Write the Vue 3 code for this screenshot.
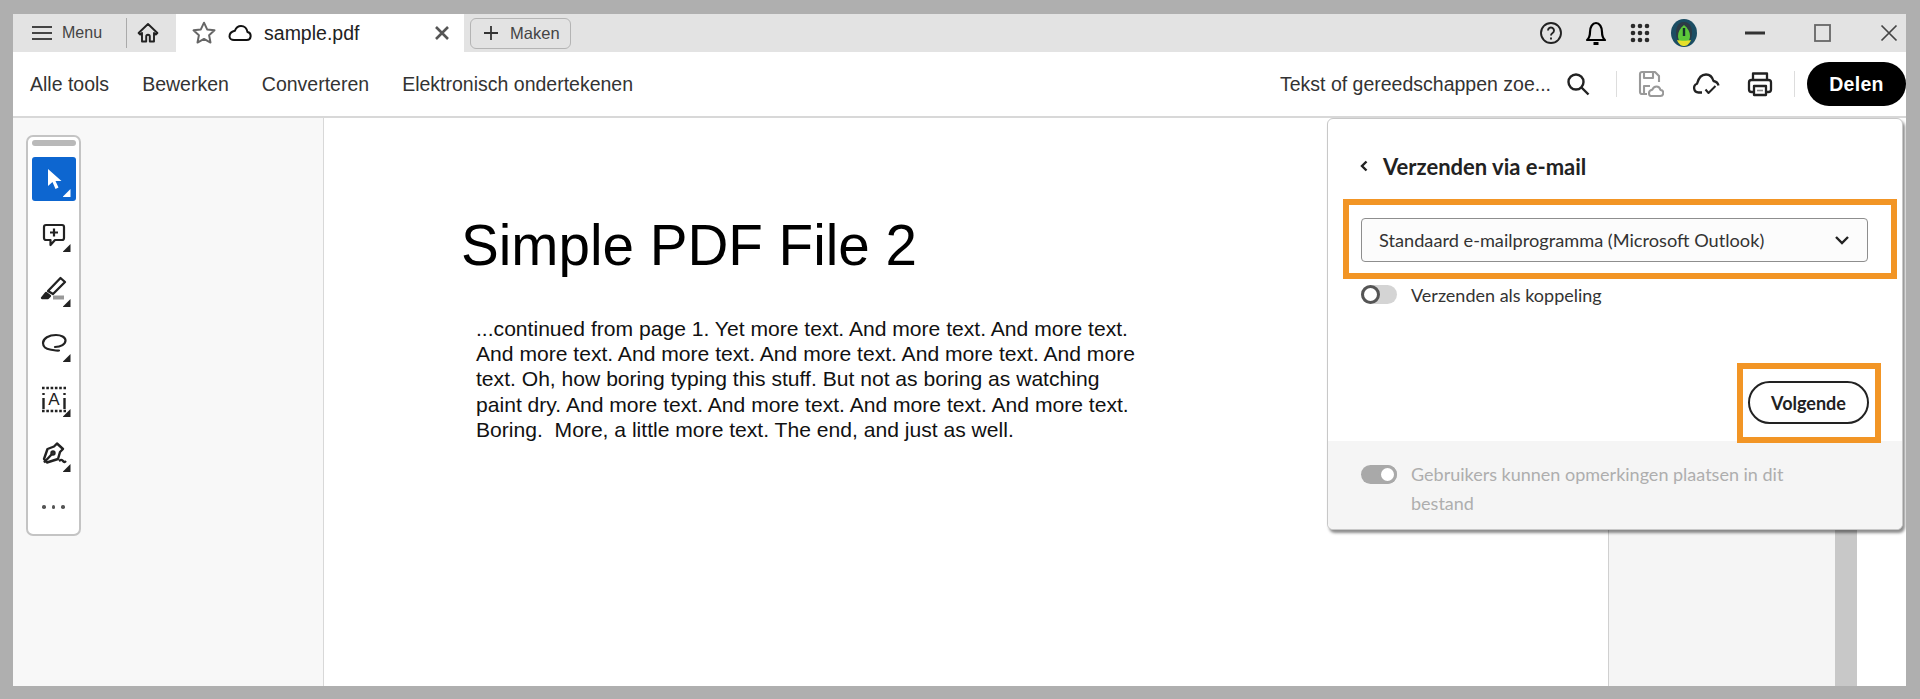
<script setup>
const navItems = ['Alle tools', 'Bewerken', 'Converteren', 'Elektronisch ondertekenen']
const pdfLines = [
  '...continued from page 1. Yet more text. And more text. And more text.',
  'And more text. And more text. And more text. And more text. And more',
  'text. Oh, how boring typing this stuff. But not as boring as watching',
  'paint dry. And more text. And more text. And more text. And more text.',
  'Boring.  More, a little more text. The end, and just as well.'
]
</script>

<template>
  <div class="frame">
    <header class="tabbar">
      <button class="menu">
        <svg width="22" height="18" viewBox="0 0 22 18"><path d="M1 3h20M1 9h20M1 15h20" stroke="#444" stroke-width="2.200" fill="none"/></svg>
        <span>Menu</span>
      </button>
      <i class="tab-divider"></i>
      <svg class="home" width="24" height="24" viewBox="0 0 24 24" fill="none" stroke="#222" stroke-width="1.900" stroke-linejoin="round"><path d="M12 3 2.600 12l1.600 1.600 1.800-1.600v8.500h4.200v-5a1.800 1.800 0 0 1 3.600 0v5H18V12l1.800 1.600 1.600-1.600z"/></svg>
      <div class="tab">
        <svg class="star" width="26" height="26" viewBox="0 0 24 24" fill="none" stroke="#666" stroke-width="1.800" stroke-linejoin="round"><path d="m12 2.500 2.900 6.200 6.800.8-5 4.600 1.300 6.700-6-3.300-6 3.300 1.300-6.700-5-4.600 6.800-.8z"/></svg>
        <svg class="cloud" width="24" height="18" viewBox="0 0 24 18" fill="none" stroke="#111" stroke-width="2" stroke-linejoin="round"><path d="M6 16h12.500a4 4 0 0 0 1-7.900C19 4.800 16.500 2 13 2c-3.200 0-5 2-6.200 4.800C3.600 7.500 1.500 10 1.500 12.500 1.500 14.500 3.500 16 6 16z"/></svg>
        <span class="tab-name">sample.pdf</span>
        <svg class="tab-close" width="16" height="16" viewBox="0 0 16 16"><path d="m2 2 12 12M14 2 2 14" stroke="#555" stroke-width="2.600"/></svg>
      </div>
      <button class="maken">
        <svg width="16" height="16" viewBox="0 0 16 16"><path d="M8 1v14M1 8h14" stroke="#333" stroke-width="1.800"/></svg>
        <span>Maken</span>
      </button>
      <div class="window-icons">
        <svg class="w-help" width="24" height="24" viewBox="0 0 24 24" fill="none" stroke="#222" stroke-width="1.900"><circle cx="12" cy="12" r="10"/><path d="M9 9.500a3 3 0 1 1 4.600 2.500c-1 .7-1.600 1.200-1.600 2.500"/><path d="M12 16.500v2"/></svg>
        <svg class="w-bell" width="24" height="28" viewBox="0 0 24 28" fill="none" stroke="#000" stroke-width="2.200" stroke-linejoin="round"><path d="M3 21c2.500-2 3-3.500 3-8 0-5 2.500-9 6-9s6 4 6 9c0 4.500.5 6 3 8z"/><path d="M9.500 24.500h5" stroke-width="3"/></svg>
        <svg class="w-apps" width="20" height="20" viewBox="0 0 20 20" fill="#2a2a2a"><circle cx="3" cy="3" r="2.300"/><circle cx="10" cy="3" r="2.300"/><circle cx="17" cy="3" r="2.300"/><circle cx="3" cy="10" r="2.300"/><circle cx="10" cy="10" r="2.300"/><circle cx="17" cy="10" r="2.300"/><circle cx="3" cy="17" r="2.300"/><circle cx="10" cy="17" r="2.300"/><circle cx="17" cy="17" r="2.300"/></svg>
        <svg class="w-avatar" width="26" height="28" viewBox="0 0 26 28"><ellipse cx="13" cy="14" rx="13" ry="14" fill="#1b4d63"/><path d="M13 3C6 3 5 10 5 14c0 6 3 10 8 11 5-1 8-5 8-11 0-4-1-11-8-11z" fill="#2d3a46"/><path d="M13 6c-4 3-6 7-6 11 0 4 3 9 6 9s6-5 6-9c0-4-2-8-6-11z" fill="#5cc83a"/><path d="M6 21c2 5 5 6 7 6s5-1 7-6c-3 1-11 1-14 0z" fill="#e6e02a"/><path d="M13 9v8" stroke="#14302c" stroke-width="2.400"/></svg>
        <svg class="w-min" width="20" height="4" viewBox="0 0 20 4"><path d="M0 2h20" stroke="#333" stroke-width="3"/></svg>
        <svg class="w-max" width="17" height="18" viewBox="0 0 17 18"><rect x="1" y="1" width="15" height="16" fill="none" stroke="#666" stroke-width="1.800"/></svg>
        <svg class="w-close" width="18" height="18" viewBox="0 0 18 18"><path d="m1.500 1.500 15 15M16.500 1.500l-15 15" stroke="#444" stroke-width="1.700"/></svg>
      </div>
    </header>

    <nav class="toolbar">
      <a v-for="item in navItems" :key="item" class="nav-item">{{ item }}</a>
      <span class="search-text">Tekst of gereedschappen zoe...</span>
      <svg class="t-search" width="24" height="24" viewBox="0 0 24 24" fill="none" stroke="#222" stroke-width="2.400"><circle cx="10" cy="10" r="7.500"/><path d="m15.500 15.500 7 7"/></svg>
      <i class="tool-divider d1"></i>
      <svg class="t-save" width="26" height="28" viewBox="0 0 26 28" fill="none" stroke="#999" stroke-width="2.100" stroke-linejoin="round"><path d="M9 24H4a2 2 0 0 1-2-2V4a2 2 0 0 1 2-2h13l4 4v6"/><path d="M6 2v6h9V2M6 24v-8h6"/><path d="M13 26h9a3 3 0 0 0 .5-6c-.5-2-2-3.500-4-3.500-2.200 0-3.500 1.300-4.200 3.200-1.800.3-3.300 1.500-3.300 3.300 0 1.700 1 3 2 3z" fill="#fff"/></svg>
      <svg class="t-cloud" width="28" height="24" viewBox="0 0 28 24" fill="none" stroke="#222" stroke-width="2.300" stroke-linejoin="round"><path d="M10 20.500H6.500a4.500 4.500 0 0 1-1.500-8.700C6.500 6 10 2.500 14 2.500c4 0 6.500 3 7.500 6.500 2.500.5 4.500 2.300 5 4.500"/><path d="m13.500 17.500 3 3.500 7-7" stroke-width="2"/></svg>
      <svg class="t-print" width="26" height="26" viewBox="0 0 26 26" fill="none" stroke="#222" stroke-width="2.300" stroke-linejoin="round"><path d="M6 9V2.500h14V9"/><rect x="2" y="9" width="22" height="12" rx="2.500"/><rect x="7" y="15" width="12" height="9" fill="#fff"/><path d="M10 19.500h6" stroke-width="1.600" stroke="#888"/></svg>
      <i class="tool-divider d2"></i>
      <button class="delen">Delen</button>
    </nav>

    <main class="workspace">
      <aside class="left-panel">
        <div class="rail">
          <i class="handle"></i>
          <button class="tool selected">
            <svg width="18" height="24" viewBox="0 0 18 24"><path d="M3 2v17l4.500-4 3 7 3-1.500-3-6.500h6z" fill="#fff"/></svg>
          </button>
          <button class="tool icon-comment">
            <svg width="24" height="26" viewBox="0 0 24 26" fill="none" stroke="#222" stroke-width="2.200" stroke-linejoin="round"><path d="M4 2h16a2 2 0 0 1 2 2v11a2 2 0 0 1-2 2h-7l-4.500 5v-5H4a2 2 0 0 1-2-2V4a2 2 0 0 1 2-2z"/><path d="M12 5.500v8M8 9.500h8"/></svg>
          </button>
          <button class="tool">
            <svg width="28" height="26" viewBox="0 0 28 26" fill="none" stroke="#222" stroke-width="2.300" stroke-linejoin="round"><path d="M20.500 2 25 6 13 18l-5-3z"/><path d="m2 22 4-5 4 3-2 2z" fill="#222"/><path d="M13 21.500h11" stroke="#999" stroke-width="4"/></svg>
          </button>
          <button class="tool">
            <svg width="26" height="24" viewBox="0 0 26 24" fill="none" stroke="#222" stroke-width="2.200" stroke-linecap="round"><path d="M14 15c6 0 10.500-3 10.500-6.500C24.500 5 20 3 15 3 8 3 2 6.500 2 11c0 3.500 3 6 7 6.500 3 .4 7 1.500 9 1"/></svg>
          </button>
          <button class="tool">
            <svg width="26" height="28" viewBox="0 0 26 28" fill="none" stroke="#222"><path d="M1 3h24M1 26h24" stroke-width="2.600" stroke-dasharray="2.600 1.700"/><path d="M2.500 8v2M23.500 8v2" stroke-width="2.400"/><path d="M2.500 13v11M23.500 13v11" stroke-width="2.400"/><text x="13" y="20" text-anchor="middle" class="a-glyph">A</text></svg>
          </button>
          <button class="tool">
            <svg width="28" height="26" viewBox="0 0 28 26" fill="none" stroke="#222" stroke-width="2.400" stroke-linejoin="round"><path d="M17 2.500 23 8l-3 3-2 7-11 3.500-3-3.500L7.500 8l6.500-2.500z"/><path d="M4 21.500 12 13"/><circle cx="13" cy="12" r="1.500"/><path d="M19 20c2-1.500 3-1.500 4 0s2 1 3 0"/></svg>
          </button>
          <div class="dots"><i></i><i></i><i></i></div>
        </div>
      </aside>

      <section class="document">
        <h1 class="pdf-title">Simple PDF File 2</h1>
        <p class="pdf-body"><span v-for="line in pdfLines" :key="line" class="pdf-line">{{ line }}</span></p>
      </section>

      <aside class="right-panel"></aside>
      <div class="scroll-track"></div>
      <div class="white-edge"></div>

      <div class="popup">
        <div class="popup-title">
          <svg width="10" height="14" viewBox="0 0 10 14"><path d="M7.500 2.500 3 7l4.500 4.500" fill="none" stroke="#222" stroke-width="2.400"/></svg>
          <span>Verzenden via e-mail</span>
        </div>
        <div class="callout select-callout">
          <div class="select">
            <span>Standaard e-mailprogramma (Microsoft Outlook)</span>
            <svg width="16" height="10" viewBox="0 0 16 10"><path d="m2 2 6 6 6-6" fill="none" stroke="#222" stroke-width="2.400"/></svg>
          </div>
        </div>
        <div class="switch-row">
          <span class="switch off"></span>
          <span>Verzenden als koppeling</span>
        </div>
        <div class="action-row">
          <div class="callout button-callout">
            <button class="volgende">Volgende</button>
          </div>
        </div>
        <footer class="popup-footer">
          <span class="switch on"></span>
          <span class="footer-text">Gebruikers kunnen opmerkingen plaatsen in dit bestand</span>
        </footer>
      </div>
    </main>
  </div>
</template>

<style scoped>
.frame {
  margin: 14px 14px 13px 13px;
  width: 1893px;
  height: 672px;
  background: #fff;
  display: flex;
  flex-direction: column;
  font-family: "Liberation Sans", Arial, sans-serif;
  overflow: hidden;
}
button { font-family: inherit; padding: 0; border: 0; background: none; }
svg { display: block; flex: none; }

.tabbar {
  height: 38px;
  flex: none;
  background: #e3e3e3;
  display: flex;
  align-items: center;
}
.menu {
  display: flex;
  align-items: center;
  margin-left: 18px;
  font-size: 16px;
  color: #444;
  gap: 9px;
}
.tab-divider { width: 1px; height: 30px; background: #aaa; margin-left: 24px; }
.home { margin-left: 9px; }
.tab {
  margin-left: 16px;
  width: 288px;
  height: 38px;
  background: #fff;
  display: flex;
  align-items: center;
  position: relative;
}
.star { margin-left: 15px; }
.cloud { margin-left: 11px; }
.tab-name { margin-left: 12px; font-size: 19.500px; color: #222; }
.tab-close { margin-left: auto; margin-right: 14px; }
.maken {
  margin-left: 6px;
  width: 101px;
  height: 31px;
  border: 1.500px solid #b4b4b4;
  border-radius: 6px;
  display: flex;
  align-items: center;
  padding-left: 12px;
  gap: 11px;
  font-size: 16.500px;
  color: #444;
  box-sizing: border-box;
}
.window-icons { display: flex; align-items: center; margin-left: auto; }
.w-help { margin-right: 21px; }
.w-bell { margin-right: 22px; }
.w-apps { margin-right: 21px; }
.w-avatar { margin-right: 48px; }
.w-min { margin-right: 49px; }
.w-max { margin-right: 49px; }
.w-close { margin-right: 8px; }

.toolbar {
  height: 64px;
  flex: none;
  border-bottom: 2px solid #d8d8d8;
  display: flex;
  align-items: center;
  padding-left: 17px;
  color: #333;
}
.nav-item { font-size: 19.500px; margin-right: 33px; color: #333; }
.search-text { margin-left: auto; font-size: 19.500px; color: #333; }
.t-search { margin-left: 15px; }
.tool-divider { width: 1px; height: 26px; background: #ddd; }
.d1 { margin-left: 26px; }
.t-save { margin-left: 21px; }
.t-cloud { margin-left: 28px; }
.t-print { margin-left: 27px; }
.d2 { margin-left: 21px; }
.delen {
  margin-left: 12px;
  width: 99px;
  height: 44px;
  border-radius: 22px;
  background: #000;
  color: #fff;
  font-size: 19.500px;
  font-weight: 700;
  letter-spacing: .3px;
}

.workspace { flex: 1; display: flex; position: relative; min-height: 0; }
.left-panel { flex: none; background: #f8f8f8; border-right: 1px solid #d8d8d8; padding: 17px 0 0 13px; width: 297px; }
.rail {
  width: 55px;
  height: 401px;
  box-sizing: border-box;
  border: 2px solid #c4c4c4;
  border-radius: 7px;
  background: #fff;
  display: flex;
  flex-direction: column;
  align-items: center;
  padding-top: 3px;
}
.handle { width: 44px; height: 6px; border-radius: 3px; background: #b9b9b9; flex: none; }
.tool {
  width: 44px;
  height: 44px;
  margin-top: 11px;
  flex: none;
  display: flex;
  align-items: center;
  justify-content: center;
  position: relative;
  border-radius: 3px;
}
.tool::after {
  content: "";
  position: absolute;
  right: 5px;
  bottom: 4px;
  width: 8px;
  height: 8px;
  background: #222;
  clip-path: polygon(100% 0, 100% 100%, 0 100%);
}
.tool.selected { margin-top: 11px; background: #0d66d0; }
.tool.selected::after { background: #fff; }
.icon-comment { padding-top: 3px; }
.a-glyph { font: 400 17px "Liberation Sans", sans-serif; fill: #222; stroke: none; }
.dots { margin-top: 29px; display: flex; gap: 6px; }
.dots i { width: 3.500px; height: 3.500px; border-radius: 50%; background: #555; }

.document { width: 1284px; flex: none; background: #fff; padding: 96px 0 0 137px; box-sizing: border-box; }
.pdf-title { margin: 0; font-size: 56.600px; font-weight: 400; line-height: 64px; color: #000; }
.pdf-body { margin: 38px 0 0 15px; font-size: 21.100px; line-height: 25.200px; color: #111; }
.pdf-line { display: block; white-space: pre; }

.right-panel { width: 227px; flex: none; background: #f5f5f5; border-left: 1px solid #d0d0d0; box-sizing: border-box; }
.scroll-track { width: 22px; flex: none; background: #c8c8c8; }
.white-edge { flex: 1; background: #fff; }

.popup {
  position: absolute;
  left: 1314px;
  top: 0;
  width: 576px;
  height: 412px;
  box-sizing: border-box;
  background: #fff;
  border: 1px solid #c8c8c8;
  border-radius: 6px;
  box-shadow: 2px 3px 3px rgba(0,0,0,.45);
  display: flex;
  flex-direction: column;
  color: #2c2c2c;
  font-family: "Lato", "Noto Sans", sans-serif;
}
.popup-title {
  display: flex;
  align-items: center;
  height: 26px;
  margin: 34px 0 0 31px;
  gap: 14px;
  font-size: 22px;
  font-weight: 700;
  color: #222;
}
.callout { border: 6px solid #f29525; box-sizing: border-box; }
.select-callout {
  margin: 20px 0 0 15px;
  width: 554px;
  height: 80px;
  padding: 13px 0 0 12px;
}
.select {
  width: 507px;
  height: 44px;
  box-sizing: border-box;
  border: 1.500px solid #8e8e8e;
  border-radius: 4px;
  background: #fcfcfc;
  display: flex;
  align-items: center;
  justify-content: space-between;
  padding: 0 17px;
  font-size: 18.200px;
  color: #333;
}
.switch-row {
  display: flex;
  align-items: center;
  gap: 14px;
  margin: 6px 0 0 33px;
  height: 19px;
  font-size: 18px;
  color: #333;
}
.switch {
  width: 36px;
  height: 19px;
  border-radius: 10px;
  position: relative;
  flex: none;
  box-sizing: border-box;
}
.switch::after {
  content: "";
  position: absolute;
  top: 0;
  width: 19px;
  height: 19px;
  border-radius: 50%;
  box-sizing: border-box;
  background: #fff;
}
.switch.off { background: #d4d4d4; }
.switch.off::after { left: 0; border: 3px solid #555; }
.switch.on { background: #a9a9a9; }
.switch.on::after { right: 0; border: 3px solid #a9a9a9; }
.action-row { display: flex; justify-content: flex-end; margin: 59px 21px -2px 0; position: relative; z-index: 1; }
.button-callout { width: 144px; height: 80px; padding: 12px 0 0 5px; }
.volgende {
  width: 121px;
  height: 43px;
  box-sizing: border-box;
  border: 2px solid #222;
  border-radius: 22px;
  background: #fff;
  font-family: "Lato", "Noto Sans", sans-serif;
  font-size: 18px;
  font-weight: 700;
  color: #222;
}
.popup-footer {
  flex: 1;
  background: #f5f5f5;
  border-radius: 0 0 6px 6px;
  display: flex;
  align-items: flex-start;
  gap: 14px;
  padding: 24px 100px 0 33px;
  font-size: 18px;
  line-height: 29px;
  color: #aeaeae;
}
.footer-text { margin-top: -5px; }
</style>

<style>
html, body { margin: 0; background: #afafaf; overflow: hidden; }
</style>
